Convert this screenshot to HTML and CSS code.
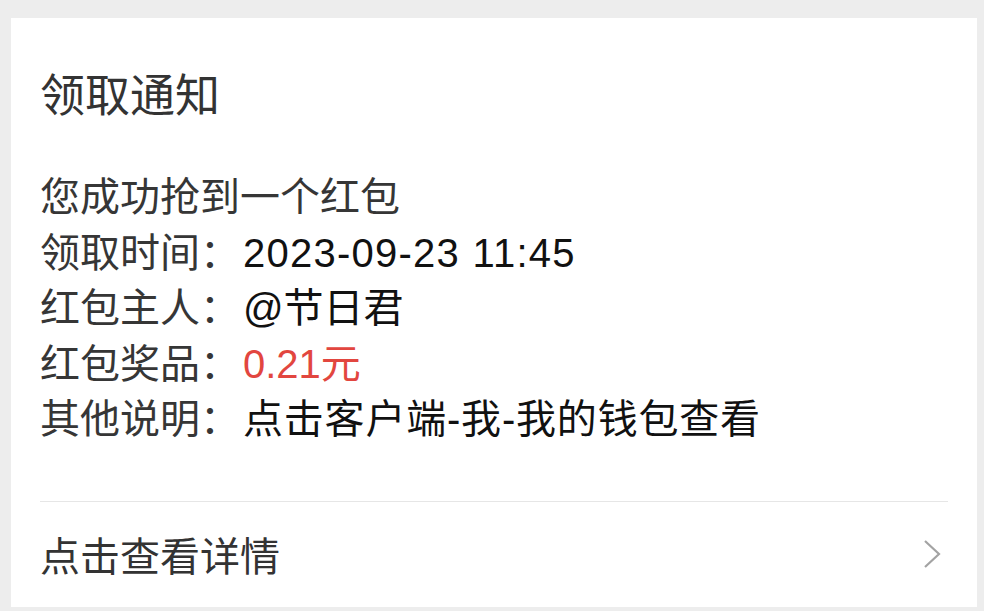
FILE: index.html
```html
<!DOCTYPE html>
<html lang="zh-CN">
<head>
  <meta charset="UTF-8">
  <title>领取通知</title>
  <meta name="viewport" content="width=device-width, initial-scale=1.0">
  <link rel="stylesheet" href="styles.css">
</head>
<body>

<div class="card">
  <!-- HEADER -->
  <div class="card-title">领取通知</div>

  <!-- DETAILS -->
  <div class="card-body">
    <div class="line">您成功抢到一个红包</div>
    <div class="line"><span class="label">领取时间：</span><span class="value time">2023-09-23 11:45</span></div>
    <div class="line"><span class="label">红包主人：</span><span class="value">@节日君</span></div>
    <div class="line"><span class="label">红包奖品：</span><span class="value red">0.21元</span></div>
    <div class="line"><span class="label">其他说明：</span><span class="value note">点击客户端-我-我的钱包查看</span></div>
  </div>

  <!-- FOOTER LINK -->
  <div class="card-footer">
    <span>点击查看详情</span>
    <svg class="arrow" width="20" height="30" viewBox="0 0 20 30">
      <polyline points="3,2 17,15 3,28" fill="none" stroke="#a3a3a3" stroke-width="2.2"/>
    </svg>
  </div>
</div>

</body>
</html>
```

FILE: styles.css
```css
body {
  margin: 0;
  background: #ededed;
  font-family: "Liberation Sans", "Noto Sans CJK SC", sans-serif;
}

.card {
  margin: 18px 7px 0 11px;
  height: 589px;
  background: #ffffff;
  padding: 0 29px;
  box-sizing: border-box;
  display: flex;
  flex-direction: column;
}

.card-title {
  padding-top: 49px;
  font-size: 45px;
  line-height: 60px;
  color: #333333;
}

.card-body {
  margin-top: 43px;
  padding-bottom: 53px;
  border-bottom: 1px solid #e6e6e6;
}

.line {
  font-size: 40px;
  line-height: 55.5px;
  color: #363636;
  white-space: nowrap;
}

.label {
  margin-right: 3px;
}

.value {
  color: #111111;
}

.value.time {
  letter-spacing: 1.25px;
}

.value.note {
  letter-spacing: 0.8px;
}

.value.red {
  color: #e2463f;
}

.card-footer {
  flex: 1;
  display: flex;
  align-items: center;
  justify-content: space-between;
  font-size: 40px;
  color: #333333;
  padding-right: 6px;
}

.arrow {
  display: block;
}
```
